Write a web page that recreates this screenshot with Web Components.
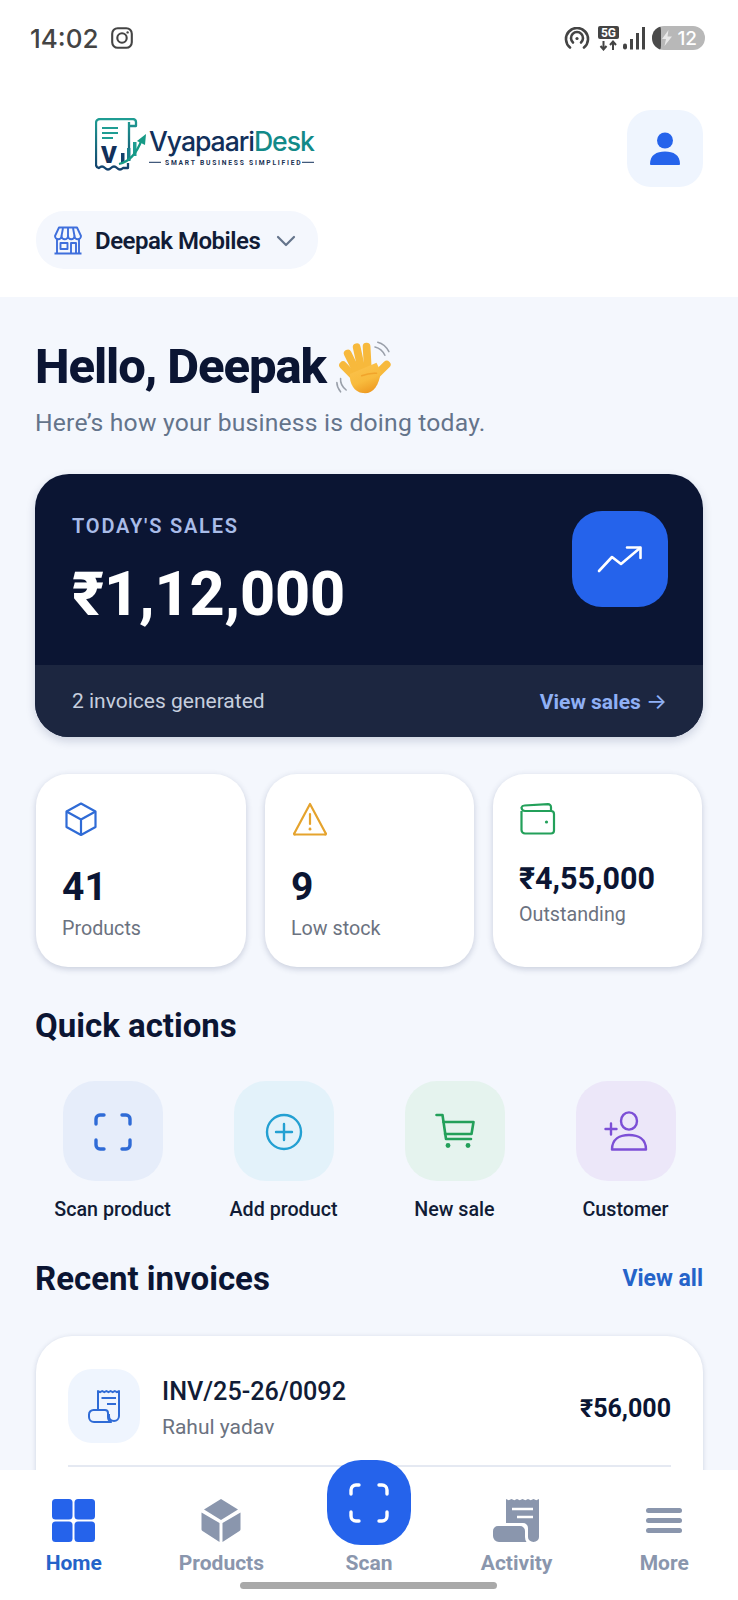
<!DOCTYPE html>
<html lang="en">
<head>
<meta charset="utf-8">
<title>VyapaariDesk</title>
<style>
  html, body { margin: 0; padding: 0; }
  body { width: 738px; height: 1600px; overflow: hidden; font-family: Roboto, "Liberation Sans", sans-serif; color: #0b1533; background: #fff; }
  #screen { display: flex; flex-direction: column; height: 1600px; }
  #main { flex: 1; min-height: 0; overflow: hidden; background: #f4f7fd; padding: 0 35px 0 35px; }
</style>
</head>
<body>
<div id="screen">
  <status-bar></status-bar>
  <app-header store="Deepak Mobiles"></app-header>
  <div id="main">
    <hello-block name="Deepak" sub="Here’s how your business is doing today."></hello-block>
    <sales-card amount="₹1,12,000" note="2 invoices generated"></sales-card>
    <stat-row>
      <stat-card value="41" label="Products" icon="box"></stat-card>
      <stat-card value="9" label="Low stock" icon="warn"></stat-card>
      <stat-card value="₹4,55,000" label="Outstanding" icon="wallet" small></stat-card>
    </stat-row>
    <section-title>Quick actions</section-title>
    <action-row>
      <quick-action label="Scan product" icon="scan" tint="#e6edfa"></quick-action>
      <quick-action label="Add product" icon="plus" tint="#e3f2fa"></quick-action>
      <quick-action label="New sale" icon="cart" tint="#e5f3ee"></quick-action>
      <quick-action label="Customer" icon="user" tint="#ece7f9"></quick-action>
    </action-row>
    <section-title link="View all">Recent invoices</section-title>
    <invoice-card number="INV/25-26/0092" customer="Rahul yadav" amount="₹56,000"></invoice-card>
  </div>
  <bottom-nav></bottom-nav>
</div>

<script>
// svg icons used in more than one place
const ICONS = {
  box: `<svg width="34" height="34" viewBox="0 0 34 34" fill="none" stroke="#2f6bd6" stroke-width="2.2" stroke-linejoin="round"><path d="M17 1.5 L31.5 9.5 V25 L17 33 L2.5 25 V9.5Z"/><path d="M2.5 9.5 L17 17.5 L31.5 9.5 M17 17.5 V33"/></svg>`,
  warn: `<svg width="34" height="34" viewBox="0 0 34 34" fill="none" stroke="#e5a32d" stroke-width="2.2" stroke-linejoin="round" stroke-linecap="round"><path d="M17 2 L32.5 31 a.8 .8 0 0 1 -.7 1.5 H2.2 a.8 .8 0 0 1 -.7 -1.5Z"/><path d="M17 12 V22"/><path d="M17 27 V27.2" stroke-width="2.8"/></svg>`,
  wallet: `<svg width="36" height="32" viewBox="0 0 36 32" fill="none" stroke="#23a05a" stroke-width="2.2" stroke-linejoin="round"><path d="M1.5 8 V27 a3.5 3.5 0 0 0 3.5 3.5 H31 a3 3 0 0 0 3 -3 V11 a3 3 0 0 0 -3 -3 H5 a3.5 3.5 0 0 1 -3.5 -3.5 a3 3 0 0 1 2.8 -2 L28 1.2 a3 3 0 0 1 3 3 V8"/><circle cx="26.5" cy="19" r="1.6" fill="#23a05a" stroke="none"/></svg>`,
  scan: `<svg width="38" height="38" viewBox="0 0 38 38" fill="none" stroke="#2f6bd6" stroke-width="3.4" stroke-linecap="round" style="margin-top:2px"><path d="M2 11 V6 a4 4 0 0 1 4 -4 H10 M28 2 H32 a4 4 0 0 1 4 4 V11 M36 27 V32 a4 4 0 0 1 -4 4 H28 M10 36 H6 a4 4 0 0 1 -4 -4 V27"/></svg>`,
  plus: `<svg width="38" height="38" viewBox="0 0 38 38" fill="none" stroke="#23a0d2" stroke-width="2.4" stroke-linecap="round" style="margin-top:2px"><circle cx="19" cy="19" r="17"/><path d="M19 11 V27 M11 19 H27"/></svg>`,
  cart: `<svg width="40" height="36" viewBox="0 0 40 36" fill="none" stroke="#23a05a" stroke-width="2.6" stroke-linecap="round" stroke-linejoin="round"><path d="M1.5 2 H7.5 L11 26 H36"/><path d="M8.5 9 H38.5 L36.5 21 H10"/><circle cx="13" cy="32.5" r="2.4" fill="#23a05a" stroke="none"/><circle cx="33" cy="32.5" r="2.4" fill="#23a05a" stroke="none"/></svg>`,
  user: `<svg width="44" height="40" viewBox="0 0 44 40" fill="none" stroke="#7c4fd6" stroke-width="2.4" stroke-linecap="round" stroke-linejoin="round"><ellipse cx="25" cy="10" rx="8" ry="8.6"/><path d="M8 38.5 C8 28 16 24 25 24 C34 24 42 28 42 38.5Z"/><path d="M1.5 18 H12.5 M7 12.5 V23.5"/></svg>`,
};

class StatusBar extends HTMLElement {
  connectedCallback() {
    this.attachShadow({ mode: 'open' }).innerHTML = `
      <style>
        :host { display: flex; align-items: center; justify-content: space-between; height: 76px; padding: 0 33px 0 30px; background: #fff; color: #444; box-sizing: border-box; }
        .left { display: flex; align-items: center; gap: 12px; }
        .time { font: 500 26px Inter, Roboto, sans-serif; letter-spacing: 0; }
        .right { display: flex; align-items: center; }
        .batt { position: relative; width: 53px; height: 24px; margin-left: 7px; border-radius: 12px; background: #b8b8b8; overflow: hidden; display: flex; align-items: center; justify-content: flex-end; padding-right: 8px; box-sizing: border-box; color: #fff; font: 500 19px Inter, Roboto, sans-serif; }
        .batt::before { content: ""; position: absolute; left: 0; top: 0; width: 9px; height: 24px; background: #4a4a4a; border-radius: 12px 3px 3px 12px / 12px 8px 8px 12px; }
        .batt svg { position: absolute; left: 9px; top: 4px; }
      </style>
      <div class="left">
        <span class="time">14:02</span>
        <svg width="22" height="22" viewBox="0 0 22 22" fill="none" stroke="#444" stroke-width="2.1"><rect x="1.2" y="1.2" width="19.6" height="19.6" rx="5.5"/><circle cx="11" cy="11" r="4.7"/><circle cx="16.6" cy="5.4" r="1.2" fill="#444" stroke="none"/></svg>
      </div>
      <div class="right">
        <svg width="26" height="22" viewBox="0 0 26 22" fill="none" stroke="#444" stroke-width="2.6" stroke-linecap="round"><path d="M6 20.5 A11 11 0 1 1 20 20.5"/><path d="M9 15.5 A6 6 0 1 1 17 15.5"/><circle cx="13" cy="11.5" r="1.6" fill="#444" stroke="none"/></svg>
        <svg width="23" height="25" viewBox="0 0 23 25" style="margin-left:7px"><rect x="1" y="0" width="21" height="13" rx="2" fill="#444"/><text x="11.5" y="11" text-anchor="middle" font-family="Roboto, sans-serif" font-weight="700" font-size="12" fill="#fff">5G</text><path d="M6.5 15 V23 M3.5 20 L6.5 23.5 L9.5 20 M16 24 V16 M13 19 L16 15.5 L19 19" stroke="#444" stroke-width="2" fill="none"/></svg>
        <svg width="24" height="23" viewBox="0 0 24 23" fill="#444" style="margin-left:1px"><rect x="2" y="16.5" width="4" height="6" rx="2"/><rect x="9" y="12" width="3" height="10.5"/><rect x="15" y="6" width="3" height="16.5"/><rect x="21" y="0" width="3" height="22.5"/></svg>
        <div class="batt"><svg width="12" height="16" viewBox="0 0 12 16" fill="#e8e8e8"><path d="M7.5 0 L1 9 H5 L3.5 16 L11 6.5 H6.5Z"/></svg>12</div>
      </div>`;
  }
}
customElements.define('status-bar', StatusBar);

class AppHeader extends HTMLElement {
  connectedCallback() {
    const store = this.getAttribute('store');
    this.attachShadow({ mode: 'open' }).innerHTML = `
      <style>
        :host { display: block; height: 221px; padding: 34px 35px 0 36px; box-sizing: border-box; background: #fff; }
        .top { display: flex; justify-content: space-between; align-items: flex-start; height: 77px; }
        .logo { display: block; margin: 8px 0 0 59px; }
        .profile { width: 76px; height: 77px; border-radius: 24px; background: #eff5fe; display: flex; align-items: center; justify-content: center; }
        .pill { display: inline-flex; align-items: center; box-sizing: border-box; width: 282px; height: 58px; margin-top: 24px; padding: 1px 0 0 18px; border-radius: 28px; background: #f4f7fd; color: #111c36; font: 600 24px Roboto, sans-serif; letter-spacing: -.5px; }
        .pill span { margin-left: 13px; }
        .pill svg:last-child { margin-left: 16px; }
      </style>
      <div class="top">
        <svg class="logo" width="228" height="54" viewBox="0 0 228 54">
          <defs><linearGradient id="lg" x1="0" y1="0" x2="0" y2="1"><stop offset="0" stop-color="#1f9d93"/><stop offset="1" stop-color="#12406c"/></linearGradient></defs>
          <path d="M1 5 a4 4 0 0 1 4 -4 H38 a3 3 0 0 1 3 3 V8 H34 V14 M34 4 V30 M1 5 V47 a3.5 3.5 0 0 0 3 3 Q7 47 10 50 T16 50 T22 50 T28 50 H33 V45" fill="none" stroke="url(#lg)" stroke-width="2.3" stroke-linejoin="round"/>
          <path d="M7 10 H23 M7 15 H23 M7 20 H18" stroke="#1f9d93" stroke-width="1.8"/>
          <text x="6" y="45" font-family="Roboto, sans-serif" font-weight="900" font-size="24" fill="#12305a">V</text>
          <path d="M26 35 h3.5 v10 h-3.5Z" fill="#12406c"/><path d="M32 30 h3.5 v13 h-3.5Z" fill="#1a7f8c"/><path d="M38 24 h3.5 v14 h-3.5Z" fill="#1f9d93"/>
          <path d="M24 46 Q39 43 47 21" fill="none" stroke="#169a86" stroke-width="2.2"/><path d="M42 23 L51 16 L50 27Z" fill="#169a86"/>
          <text x="54" y="32.5" font-family="Inter, Roboto, sans-serif" font-weight="500" font-size="26.6" letter-spacing="-1.05"><tspan fill="#12305a">Vyapaari</tspan><tspan fill="#128a88">Desk</tspan></text>
          <path d="M54 44.3 H66 M207 44.3 H219" stroke="#12305a" stroke-width="1"/>
          <text x="70" y="46.8" font-family="Roboto, sans-serif" font-weight="700" font-size="6.7" letter-spacing="1.78" fill="#1b3152">SMART BUSINESS SIMPLIFIED</text>
        </svg>
        <div class="profile">
          <svg width="32" height="34" viewBox="0 0 32 34" fill="#2563eb"><circle cx="16" cy="8.5" r="8"/><path d="M1 32 C1 23 7.5 19.5 16 19.5 C24.5 19.5 31 23 31 32 a1 1 0 0 1 -1 1 H2 a1 1 0 0 1 -1 -1Z"/></svg>
        </div>
      </div>
      <div class="pill">
        <svg width="28" height="29" viewBox="0 0 28 29" fill="none" stroke="#3f6fdc" stroke-width="1.9" stroke-linejoin="round"><path d="M5 1.5 H23 L27 10 a3.2 3.2 0 0 1 -6.5 0 a3.2 3.2 0 0 1 -6.5 0 a3.2 3.2 0 0 1 -6.5 0 a3.2 3.2 0 0 1 -6.5 0Z"/><path d="M3 13 V27.5 H25 V13 M0.5 27.5 H27.5"/><rect x="6.5" y="17" width="7" height="6"/><path d="M17 27.5 V17 H22 V27.5"/><path d="M9 2 L7.5 10 M14 2 V10 M19 2 L20.5 10"/></svg>
        <span>${store}</span>
        <svg width="20" height="12" viewBox="0 0 20 12" fill="none" stroke="#64748b" stroke-width="2.2" stroke-linecap="round" stroke-linejoin="round"><path d="M2 2 L10 10 L18 2"/></svg>
      </div>`;
  }
}
customElements.define('app-header', AppHeader);

class HelloBlock extends HTMLElement {
  connectedCallback() {
    this.attachShadow({ mode: 'open' }).innerHTML = `
      <style>
        :host { display: block; height: 177px; box-sizing: border-box; padding-top: 39px; }
        h1 { display: flex; align-items: center; margin: 0; height: 62px; font: 800 49px/62px Roboto, sans-serif; letter-spacing: -1.1px; color: #0b1533; }
        h1 svg { margin-left: 9px; margin-top: 2px; }
        p { margin: 10px 0 0 0; font: 400 24.7px/30px Roboto, sans-serif; letter-spacing: .2px; color: #64748b; }
      </style>
      <h1>Hello, ${this.getAttribute('name')}
        <svg width="57" height="56" viewBox="34 24 184 178">
          <defs><linearGradient id="h" x1="0.2" y1="0" x2="0.6" y2="1"><stop offset="0" stop-color="#fcc34e"/><stop offset=".6" stop-color="#f8bb3d"/><stop offset="1" stop-color="#ee9a22"/></linearGradient></defs>
          <path d="M163 45 Q185 50 195 72 M172 30 Q195 36 208 60 M52 147 Q50 168 70 184 M40 160 Q40 175 52 190" fill="none" stroke="#9aa0aa" stroke-width="5" stroke-linecap="round"/>
          <g stroke="#f7b93c" stroke-width="25" stroke-linecap="round" fill="none">
            <path d="M60 104 L100 145"/><path d="M75 66 L104 125"/><path d="M104 46 L120 120"/><path d="M136 44 L140 120"/><path d="M201 102 L160 142"/>
          </g>
          <path d="M82 132 L168 96 L182 125 C176 172 156 198 124 194 C96 190 80 164 82 132Z" fill="url(#h)"/>
          <path d="M120 138 Q145 128 168 130" stroke="#ee9a22" stroke-width="5" fill="none" stroke-linecap="round" opacity=".7"/>
        </svg>
      </h1>
      <p>${this.getAttribute('sub')}</p>`;
  }
}
customElements.define('hello-block', HelloBlock);

class SalesCard extends HTMLElement {
  connectedCallback() {
    this.attachShadow({ mode: 'open' }).innerHTML = `
      <style>
        :host { display: block; height: 263px; border-radius: 34px; background: #0b1533; overflow: hidden; box-shadow: 0 4px 10px rgba(30,45,90,.18); color: #fff; }
        .body { height: 191px; box-sizing: border-box; padding: 37px 35px 0 37px; display: flex; justify-content: space-between; }
        .label { margin-top: 2px; font: 600 20px/26px Roboto, sans-serif; letter-spacing: 1.8px; color: #a9bce8; }
        .amount { margin-top: 20px; font: 800 61px/70px Roboto, sans-serif; letter-spacing: -.2px; }
        .tile { width: 96px; height: 96px; border-radius: 30px; background: #2563eb; display: flex; align-items: center; justify-content: center; }
        .foot { height: 72px; box-sizing: border-box; padding: 0 36px 0 37px; background: #1c2640; display: flex; align-items: center; justify-content: space-between; font: 400 21px Roboto, sans-serif; color: #c6cede; }
        .foot b { font-weight: 700; font-size: 21px; color: #8fb0f5; }
        .foot i { font: 400 22px Inter, Roboto, sans-serif; }
      </style>
      <div class="body">
        <div>
          <div class="label">TODAY'S SALES</div>
          <div class="amount">${this.getAttribute('amount')}</div>
        </div>
        <div class="tile">
          <svg width="46" height="28" viewBox="0 0 46 28" fill="none" stroke="#fff" stroke-width="2.6" stroke-linecap="round" stroke-linejoin="round"><path d="M2 26 L15 12 L24 19 L43 3"/><path d="M30 2.5 H43.5 V13"/></svg>
        </div>
      </div>
      <div class="foot"><span>${this.getAttribute('note')}</span><b>View sales <i>→</i></b></div>`;
  }
}
customElements.define('sales-card', SalesCard);

class StatRow extends HTMLElement {
  connectedCallback() {
    this.attachShadow({ mode: 'open' }).innerHTML = `
      <style>:host { display: grid; grid-template-columns: 210px 209px 209px; column-gap: 19px; margin: 37px 0 0 1px; }</style>
      <slot></slot>`;
  }
}
customElements.define('stat-row', StatRow);

class StatCard extends HTMLElement {
  connectedCallback() {
    const small = this.hasAttribute('small');
    this.attachShadow({ mode: 'open' }).innerHTML = `
      <style>
        :host { display: block; height: 193px; box-sizing: border-box; padding: 28px 26px 0; border-radius: 32px; background: #fff; box-shadow: 0 2px 6px rgba(40,55,100,.22); }
        .icon { height: 36px; display: flex; align-items: center; padding-left: ${small ? 1 : 2}px; margin-top: -1px; }
        .value { margin-top: ${small ? 22 : 25}px; font: 700 ${small ? '30.5px/40px' : '39px/50px'} Roboto, sans-serif; color: #0b1533; }
        .label { margin-top: ${small ? 2 : 3}px; font: 400 19.7px/28px Roboto, sans-serif; color: #6b7280; }
      </style>
      <div class="icon">${ICONS[this.getAttribute('icon')]}</div>
      <div class="value">${this.getAttribute('value')}</div>
      <div class="label">${this.getAttribute('label')}</div>`;
  }
}
customElements.define('stat-card', StatCard);

class SectionTitle extends HTMLElement {
  connectedCallback() {
    const link = this.getAttribute('link');
    this.attachShadow({ mode: 'open' }).innerHTML = `
      <style>
        :host { display: flex; justify-content: space-between; align-items: center; height: 44px; margin-top: 37px; font: 700 33px/44px Roboto, sans-serif; color: #0b1533; }
        a { font: 700 23px/44px Roboto, sans-serif; color: #2563c9; }
      </style>
      <span><slot></slot></span>${link ? `<a>${link}</a>` : ''}`;
  }
}
customElements.define('section-title', SectionTitle);

class ActionRow extends HTMLElement {
  connectedCallback() {
    this.attachShadow({ mode: 'open' }).innerHTML = `
      <style>:host { display: grid; grid-template-columns: repeat(4, 171px); margin: 33px -9px -8px -8px; }</style>
      <slot></slot>`;
  }
}
customElements.define('action-row', ActionRow);

class QuickAction extends HTMLElement {
  connectedCallback() {
    this.attachShadow({ mode: 'open' }).innerHTML = `
      <style>
        :host { display: flex; flex-direction: column; align-items: center; height: 147px; }
        .tile { width: 100px; height: 100px; border-radius: 32px; background: ${this.getAttribute('tint')}; display: flex; align-items: center; justify-content: center; }
        .label { margin-top: 15px; font: 500 19.7px/28px Roboto, sans-serif; color: #111c36; }
      </style>
      <div class="tile">${ICONS[this.getAttribute('icon')]}</div>
      <div class="label">${this.getAttribute('label')}</div>`;
  }
}
customElements.define('quick-action', QuickAction);

class InvoiceCard extends HTMLElement {
  connectedCallback() {
    this.attachShadow({ mode: 'open' }).innerHTML = `
      <style>
        :host { display: block; height: 300px; margin: 35px 0 0 1px; box-sizing: border-box; padding: 33px 32px 0; border-radius: 36px; background: #fff; box-shadow: 0 1px 5px rgba(40,55,100,.18); }
        .row { display: flex; align-items: center; height: 74px; }
        .tile { width: 72px; height: 74px; border-radius: 24px; background: #eff5fe; display: flex; align-items: center; justify-content: center; flex: none; }
        .text { flex: 1; margin: 5px 0 0 22px; }
        .num { font: 500 25.2px/32px Roboto, sans-serif; color: #111c36; }
        .who { margin-top: 5px; font: 400 21px/28px Roboto, sans-serif; color: #6b7280; }
        .amt { margin-top: 4px; font: 700 25px Roboto, sans-serif; color: #0b1533; }
        .rule { height: 2px; margin-top: 22px; background: #e5e9f2; }
      </style>
      <div class="row">
        <div class="tile">
          <svg width="33" height="34" viewBox="0 0 33 34" fill="none" stroke="#2f6bd6" stroke-width="2" stroke-linejoin="round"><path d="M10 21 V2 l2.1 1.2 2.1 -1.2 2.1 1.2 2.1 -1.2 2.1 1.2 2.1 -1.2 2.1 1.2 2.1 -1.2 2.1 1.2 2.1 -1.2 V27 a5 5 0 0 1 -10 0 V25"/><path d="M1 25.5 a4.5 4.5 0 0 1 4.5 -4.5 H17 a3 3 0 0 1 3 3 V28 q0 3.5 3 5 H6 a5 5 0 0 1 -5 -5Z"/><path d="M13.5 9 H28 M19 15 H28" stroke-width="2.2"/></svg>
        </div>
        <div class="text">
          <div class="num">${this.getAttribute('number')}</div>
          <div class="who">${this.getAttribute('customer')}</div>
        </div>
        <div class="amt">${this.getAttribute('amount')}</div>
      </div>
      <div class="rule"></div>`;
  }
}
customElements.define('invoice-card', InvoiceCard);

class BottomNav extends HTMLElement {
  connectedCallback() {
    const grey = '#8a96ad';
    const item = (label, svg, active) => `<div class="item${active ? ' on' : ''}"><div class="ic">${svg}</div><span>${label}</span></div>`;
    this.attachShadow({ mode: 'open' }).innerHTML = `
      <style>
        :host { display: block; position: relative; height: 130px; background: #fff; }
        .items { display: grid; grid-template-columns: repeat(5, 1fr); }
        .item { display: flex; flex-direction: column; align-items: center; font: 700 21px/28px Roboto, sans-serif; color: ${grey}; padding-top: 29px; }
        .item.on { color: #2563c9; }
        .ic { height: 43px; margin-bottom: 7px; display: flex; align-items: center; }
        .scan { position: absolute; left: 327px; top: -10px; width: 84px; height: 85px; border-radius: 34px; background: #2563eb; display: flex; align-items: center; justify-content: center; }
        .home-bar { position: absolute; left: 240px; top: 112px; width: 257px; height: 7px; border-radius: 4px; background: #a9a9a9; }
      </style>
      <div class="items">
        ${item('Home', `<svg width="43" height="43" viewBox="0 0 43 43" fill="#2563eb"><rect width="20.5" height="20.5" rx="3.5"/><rect x="22.5" width="20.5" height="20.5" rx="3.5"/><rect y="22.5" width="20.5" height="20.5" rx="3.5"/><rect x="22.5" y="22.5" width="20.5" height="20.5" rx="3.5"/></svg>`, true)}
        ${item('Products', `<svg width="40" height="43" viewBox="0 0 40 43" fill="${grey}"><path d="M20 0 L37 10.5 L20 21 L3 10.5Z"/><path d="M0.5 13.5 L18.5 24 V43 L1.5 32 a2 2 0 0 1 -1 -2Z"/><path d="M39.5 13.5 L21.5 24 V43 L38.5 32 a2 2 0 0 0 1 -2Z"/></svg>`)}
        ${item('Scan', `<svg width="40" height="1" viewBox="0 0 40 1"></svg>`)}
        ${item('Activity', `<svg width="46" height="43" viewBox="0 0 46 43" fill="${grey}" style="margin-left:-2px"><path d="M13 0 l2.75 1.2 2.75 -1.2 2.75 1.2 2.75 -1.2 2.75 1.2 2.75 -1.2 2.75 1.2 2.75 -1.2 2.75 1.2 2.75 -1.2 2.75 1.2 2.75 -1.2 V38 a5.5 5 0 0 1 -11 0 V29 a5 5 0 0 0 -5 -5 H13Z"/><path d="M0 32 a5 5 0 0 1 5 -5 H27 a5 5 0 0 1 5 5 V38 q0 3 1.5 5 H6 a6 6 0 0 1 -6 -6Z"/><path d="M19 10 H40 M24 18 H40" stroke="#fff" stroke-width="2.6"/></svg>`)}
        ${item('More', `<svg width="36" height="25" viewBox="0 0 36 25" fill="${grey}"><rect width="36" height="5" rx="2.5"/><rect y="10" width="36" height="5" rx="2.5"/><rect y="20" width="36" height="5" rx="2.5"/></svg>`)}
      </div>
      <div class="scan">
        <svg width="40" height="40" viewBox="0 0 40 40" fill="none" stroke="#fff" stroke-width="3.4" stroke-linecap="round"><path d="M2 11 V7 a5 5 0 0 1 5 -5 H10 M30 2 H33 a5 5 0 0 1 5 5 V11 M38 29 V33 a5 5 0 0 1 -5 5 H30 M10 38 H7 a5 5 0 0 1 -5 -5 V29"/></svg>
      </div>
      <div class="home-bar"></div>`;
  }
}
customElements.define('bottom-nav', BottomNav);
</script>
</body>
</html>
